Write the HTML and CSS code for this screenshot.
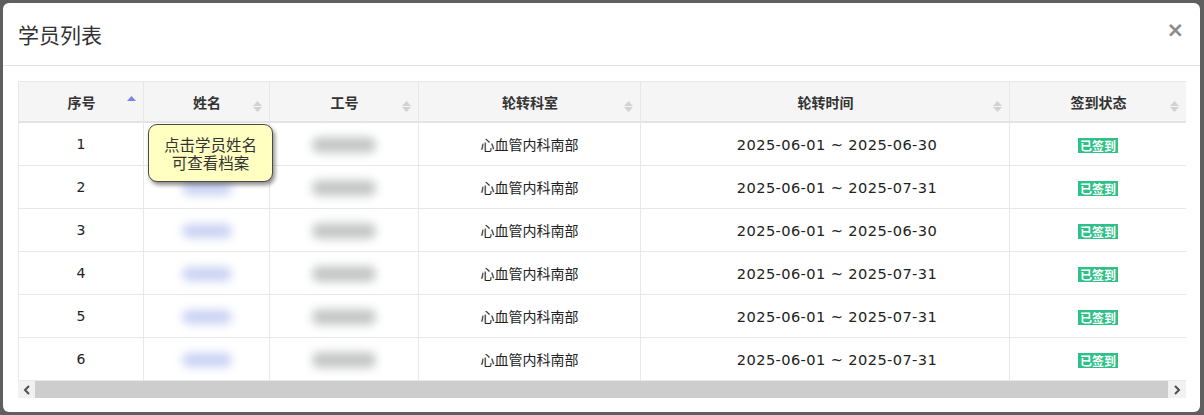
FILE: index.html
```html
<!DOCTYPE html>
<html lang="zh-CN">
<head>
<meta charset="utf-8">
<title>学员列表</title>
<link rel="stylesheet" href="styles.css">
</head>
<body class="page">
  <div class="modal">
    <div class="modal-header">
      <h4 class="modal-title">学员列表</h4>
      <button class="close" type="button">×</button>
    </div>
    <div class="modal-body">
      <div class="grid-wrap">
        <div class="grid-scroll">
          <table class="grid">
            <colgroup>
              <col class="c-no"><col class="c-name"><col class="c-id"><col class="c-dept"><col class="c-time"><col class="c-state">
            </colgroup>
            <thead>
              <tr>
                <th><div class="th-in"><span class="th-label">序号</span><svg class="sort" viewBox="0 0 9 20" width="9" height="20"><polygon class="asc" points="0,9 4.5,4 9,9"/></svg></div></th>
                <th><div class="th-in"><span class="th-label">姓名</span><svg class="sort" viewBox="0 0 9 20" width="9" height="20"><polygon class="both" points="0,14 4.5,9 9,14"/><polygon class="both" points="0,15 4.5,20 9,15"/></svg></div></th>
                <th><div class="th-in"><span class="th-label">工号</span><svg class="sort" viewBox="0 0 9 20" width="9" height="20"><polygon class="both" points="0,14 4.5,9 9,14"/><polygon class="both" points="0,15 4.5,20 9,15"/></svg></div></th>
                <th><div class="th-in"><span class="th-label">轮转科室</span><svg class="sort" viewBox="0 0 9 20" width="9" height="20"><polygon class="both" points="0,14 4.5,9 9,14"/><polygon class="both" points="0,15 4.5,20 9,15"/></svg></div></th>
                <th><div class="th-in"><span class="th-label">轮转时间</span><svg class="sort" viewBox="0 0 9 20" width="9" height="20"><polygon class="both" points="0,14 4.5,9 9,14"/><polygon class="both" points="0,15 4.5,20 9,15"/></svg></div></th>
                <th><div class="th-in"><span class="th-label">签到状态</span><svg class="sort" viewBox="0 0 9 20" width="9" height="20"><polygon class="both" points="0,14 4.5,9 9,14"/><polygon class="both" points="0,15 4.5,20 9,15"/></svg></div></th>
              </tr>
            </thead>
            <tbody>
              <tr>
                <td>1</td>
                <td><span class="masked masked-name"></span></td>
                <td><span class="masked masked-id"></span></td>
                <td class="cjk">心血管内科南部</td>
                <td class="period">2025-06-01 ~ 2025-06-30</td>
                <td><span class="badge">已签到</span></td>
              </tr>
              <tr>
                <td>2</td>
                <td><span class="masked masked-name"></span></td>
                <td><span class="masked masked-id"></span></td>
                <td class="cjk">心血管内科南部</td>
                <td class="period">2025-06-01 ~ 2025-07-31</td>
                <td><span class="badge">已签到</span></td>
              </tr>
              <tr>
                <td>3</td>
                <td><span class="masked masked-name"></span></td>
                <td><span class="masked masked-id"></span></td>
                <td class="cjk">心血管内科南部</td>
                <td class="period">2025-06-01 ~ 2025-06-30</td>
                <td><span class="badge">已签到</span></td>
              </tr>
              <tr>
                <td>4</td>
                <td><span class="masked masked-name"></span></td>
                <td><span class="masked masked-id"></span></td>
                <td class="cjk">心血管内科南部</td>
                <td class="period">2025-06-01 ~ 2025-07-31</td>
                <td><span class="badge">已签到</span></td>
              </tr>
              <tr>
                <td>5</td>
                <td><span class="masked masked-name"></span></td>
                <td><span class="masked masked-id"></span></td>
                <td class="cjk">心血管内科南部</td>
                <td class="period">2025-06-01 ~ 2025-07-31</td>
                <td><span class="badge">已签到</span></td>
              </tr>
              <tr>
                <td>6</td>
                <td><span class="masked masked-name"></span></td>
                <td><span class="masked masked-id"></span></td>
                <td class="cjk">心血管内科南部</td>
                <td class="period">2025-06-01 ~ 2025-07-31</td>
                <td><span class="badge">已签到</span></td>
              </tr>
            </tbody>
          </table>
        </div>
        <div class="hscroll">
          <div class="hs-btn"><svg viewBox="0 0 8 10" width="8" height="10"><polyline points="6,1 2,5 6,9"/></svg></div>
          <div class="hs-thumb"></div>
          <div class="hs-btn hs-btn-right"><svg viewBox="0 0 8 10" width="8" height="10"><polyline points="2,1 6,5 2,9"/></svg></div>
        </div>
        <div class="tip">点击学员姓名<br>可查看档案</div>
      </div>
    </div>
  </div>
</body>
</html>
```

FILE: styles.css
```css
/* Dialog over a dimmed page */
.page {
  margin: 0;
  padding: 3px 4px 0 3px;
  background: #5f5f5f;
  font-family: "DejaVu Sans", "Noto Sans CJK SC", sans-serif;
  color: #222;
}

.modal {
  width: 1197px;
  height: 409px;
  background: #fff;
  border-radius: 6px;
  overflow: hidden;
  display: flex;
  flex-direction: column;
}

.modal-header {
  box-sizing: border-box;
  height: 63px;
  border-bottom: 1px solid #e3e3e3;
  display: flex;
  align-items: center;
  justify-content: space-between;
  padding: 0 16px 0 15px;
}

.modal-title {
  margin: 0;
  font-family: "Noto Sans CJK SC", sans-serif;
  font-size: 21px;
  font-weight: normal;
  color: #333;
}

.close {
  border: 0;
  background: none;
  padding: 0;
  font-family: "DejaVu Sans", sans-serif;
  font-size: 21px;
  font-weight: bold;
  line-height: 1;
  color: #8a8a8a;
  margin-top: -7px;
}

.modal-body {
  padding: 15px 14px 0 15px;
}

/* Data grid */
.grid-wrap {
  position: relative;
  width: 1168px;
}

.grid-scroll {
  overflow: hidden;
}

.grid {
  border-collapse: collapse;
  table-layout: fixed;
  width: 1168px;
}

.c-no { width: 125px; }
.c-name { width: 126px; }
.c-id { width: 149px; }
.c-dept { width: 222px; }
.c-time { width: 369px; }
.c-state { width: 177px; }

.grid th {
  height: 39px;
  padding: 0 7px 0 8px;
  background: #f5f5f5;
  border: 1px solid #e8e8e8;
  border-bottom: 2px solid #e4e4e4;
  font-family: "Noto Sans CJK SC", sans-serif;
  font-size: 14px;
  font-weight: bold;
  color: #333;
}

.th-in {
  display: grid;
  grid-template-columns: 1fr auto 1fr;
  align-items: center;
}

.th-label {
  grid-column: 2;
}

.sort {
  grid-column: 3;
  justify-self: end;
  display: block;
}

.sort .both { fill: #d2d2d2; }
.sort .asc { fill: #7d82e4; }

.grid td {
  height: 42px;
  padding: 0;
  border: 1px solid #e8e8e8;
  border-top: 0;
  text-align: center;
  font-size: 14px;
  color: #222;
  white-space: nowrap;
}

.grid .cjk {
  font-family: "Noto Sans CJK SC", sans-serif;
}

.grid .period {
  padding-left: 24px;
  font-size: 14.6px;
  letter-spacing: 0.4px;
}

/* Hidden personal data, shown smudged */
.masked {
  display: inline-block;
  vertical-align: middle;
  border-radius: 7px;
  filter: blur(5px);
}

.masked-name {
  width: 50px;
  height: 14px;
  background: #cad2f3;
}

.masked-id {
  width: 64px;
  height: 16px;
  background: #c5c7c7;
}

.badge {
  display: inline-block;
  vertical-align: middle;
  padding: 0 2px;
  background: #2ec086;
  color: #fff;
  font-family: "Noto Sans CJK SC", sans-serif;
  font-size: 12px;
  font-weight: bold;
  line-height: 15px;
  margin-top: 2px;
  letter-spacing: 0;
}

/* Horizontal scroll bar of the grid */
.hscroll {
  display: flex;
  height: 17px;
}

.hs-btn {
  width: 17px;
  background: #f1f1f1;
  display: grid;
  place-items: center;
}

.hs-btn-right {
  width: 18px;
}

.hs-btn svg polyline {
  fill: none;
  stroke: #4f4f4f;
  stroke-width: 2;
}

.hs-thumb {
  flex: 1;
  background: #cdcdcd;
}

/* Hint bubble over the name column */
.tip {
  position: absolute;
  left: 130px;
  top: 43px;
  box-sizing: border-box;
  width: 125px;
  height: 58px;
  padding-top: 10px;
  background: #ffffc2;
  border: 1px solid #4a4a4a;
  border-radius: 9px;
  box-shadow: 2px 3px 4px rgba(0, 0, 0, 0.45);
  font-family: "Noto Sans CJK SC", sans-serif;
  font-size: 15.5px;
  line-height: 18px;
  color: #333;
  text-align: center;
}
```
